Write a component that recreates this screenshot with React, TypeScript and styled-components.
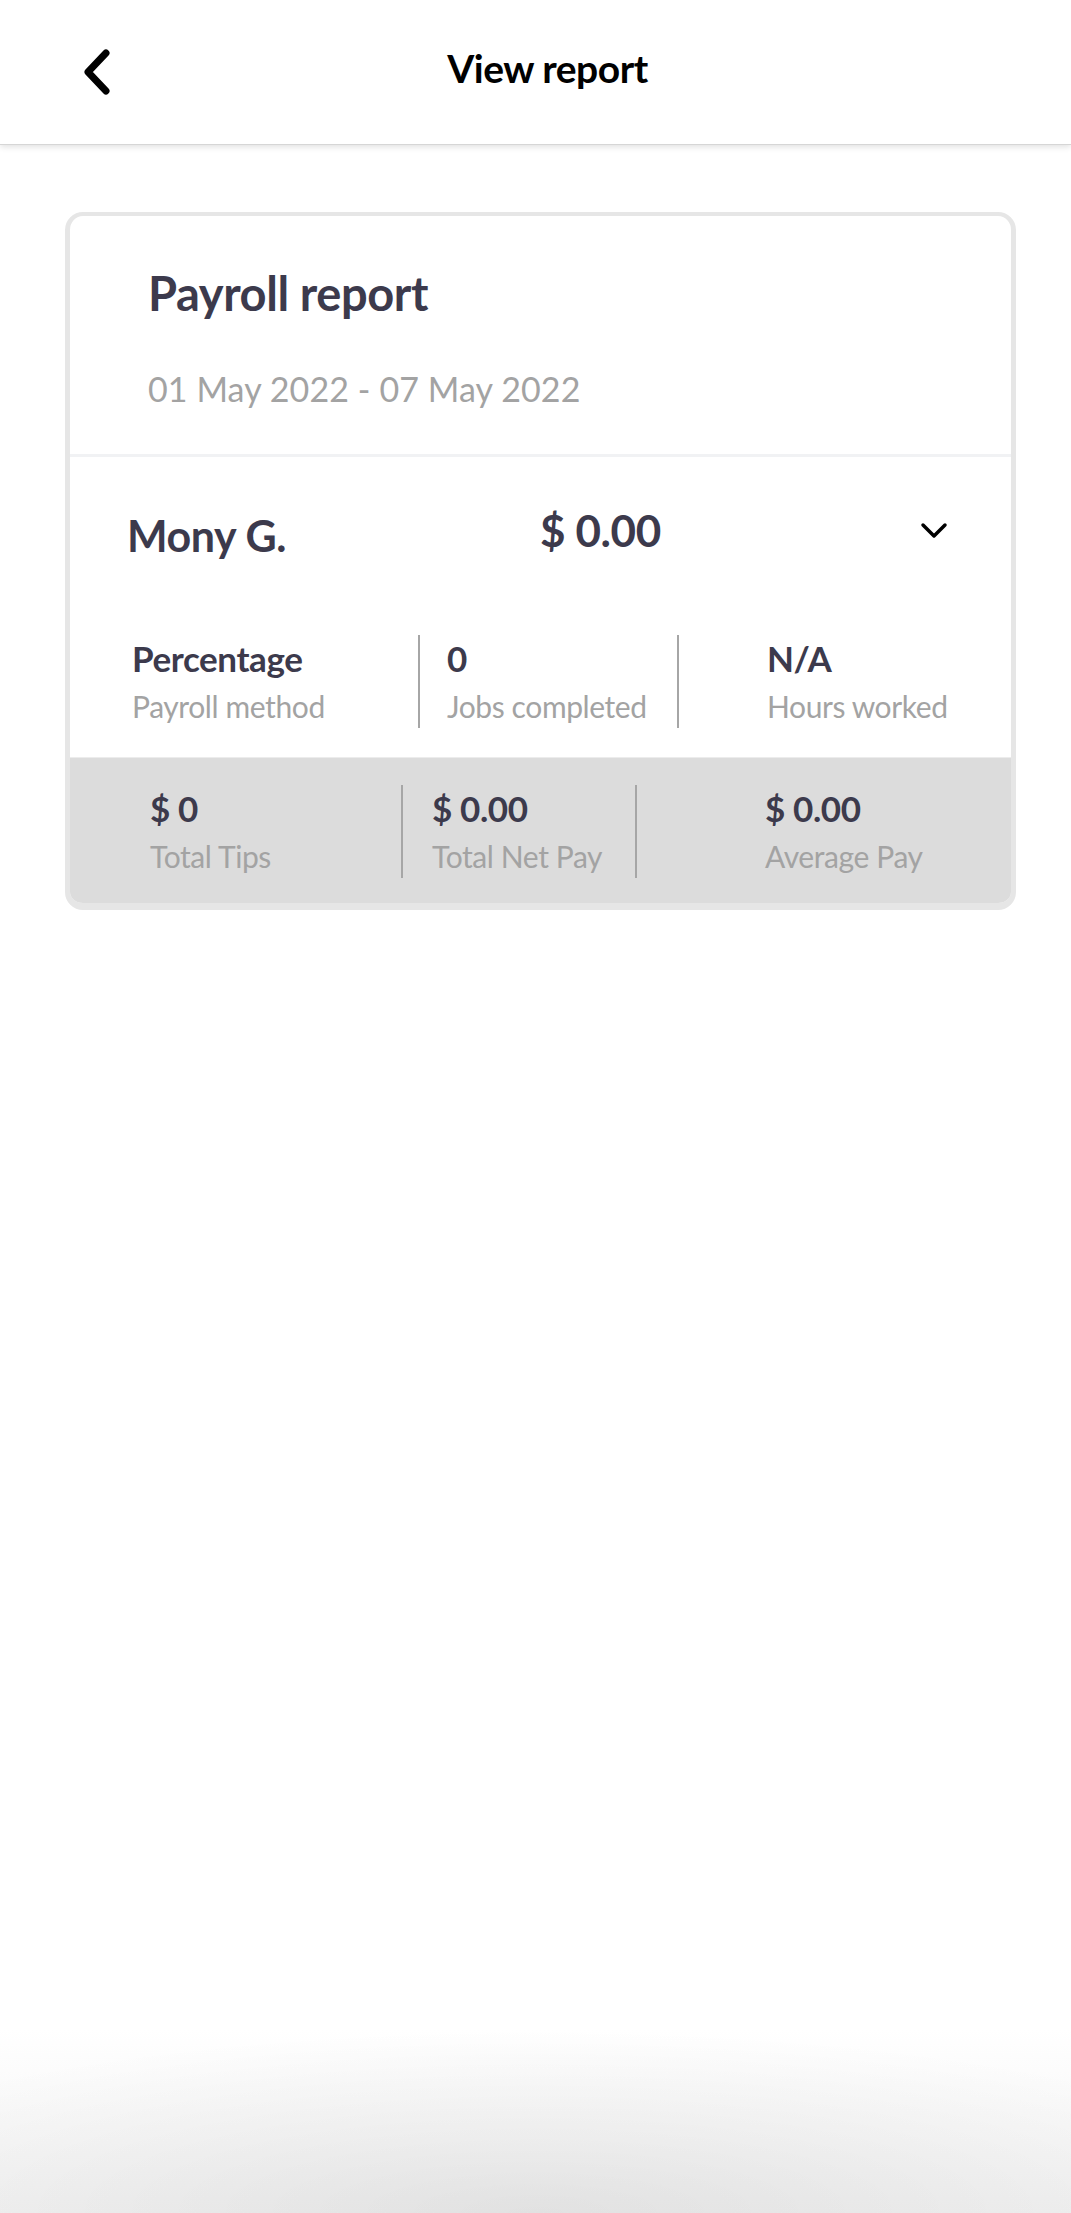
import React from "react"
import styled, { createGlobalStyle } from "styled-components"

const GlobalStyle = createGlobalStyle`
  html, body {
    margin: 0;
    padding: 0;
    background: #ffffff;
  }

  body {
    font-family: Lato, "Open Sans", "Liberation Sans", sans-serif;
    -webkit-font-smoothing: antialiased;
  }

  * {
    box-sizing: border-box;
  }
`

const DARK = "#3c3a4c"
const MUTED = "#a3a3a3"

const Page = styled.div`
  min-height: 2213px;
  display: flex;
  flex-direction: column;
  background: #ffffff;
`

const TopBar = styled.header`
  height: 144px;
  display: grid;
  grid-template-columns: 160px 1fr 160px;
  align-items: center;
  background: #ffffff;
  box-shadow: 0 1px 0 #d6d6d6, 0 3px 6px rgba(0, 0, 0, 0.12);
  position: relative;
  z-index: 1;
`

const BackButton = styled.button`
  justify-self: start;
  margin-left: 82px;
  padding: 0;
  border: none;
  background: none;
  display: flex;
  cursor: pointer;
`

const TopTitle = styled.h1`
  margin: 0 0 8px;
  padding-left: 24px;
  text-align: center;
  font-size: 39px;
  font-weight: 700;
  letter-spacing: -0.5px;
  color: #000000;
`

const Content = styled.main`
  flex: 1;
  padding: 68px 55px 0 65px;
`

const Card = styled.section`
  border: 5px solid #e6e6e6;
  border-top-width: 4px;
  border-bottom-width: 7px;
  border-radius: 18px;
  overflow: hidden;
  background: #ffffff;
`

const CardHead = styled.div`
  padding: 49px 0 44px 78px;
  border-bottom: 3px solid #f1f2f4;
`

const ReportTitle = styled.h2`
  margin: 0;
  font-size: 47px;
  line-height: 1.2;
  font-weight: 700;
  letter-spacing: -0.4px;
  color: ${DARK};
`

const DateRange = styled.div`
  margin-top: 48px;
  font-size: 34px;
  line-height: 1.2;
  font-weight: 400;
  letter-spacing: 0.1px;
  color: ${MUTED};
`

const EmployeeRow = styled.div`
  height: 153px;
  display: grid;
  grid-template-columns: 413px 1fr 28px;
  align-items: center;
  padding: 0 63px 0 57px;
`

const EmployeeName = styled.div`
  font-size: 43px;
  line-height: 1.2;
  font-weight: 700;
  letter-spacing: -0.4px;
  color: ${DARK};
  transform: translateY(2px);
`

const Amount = styled.div`
  font-size: 44px;
  line-height: 1.2;
  font-weight: 700;
  letter-spacing: -0.4px;
  color: ${DARK};
  transform: translateY(-3px);
`

const ExpandIcon = styled.svg`
  display: block;
  transform: translateY(-3px);
`

const StatsRow = styled.div<{ $shaded?: boolean; $columns: string }>`
  display: grid;
  grid-template-columns: ${(p) => p.$columns};
  padding: ${(p) => (p.$shaded ? "27px 0 25px" : "25px 0 29px")};
  background: ${(p) => (p.$shaded ? "#dcdcdc" : "#ffffff")};
  border-top: ${(p) => (p.$shaded ? "1px solid #ececec" : "none")};
`

const Stat = styled.div<{ $inset: number; $divided?: boolean }>`
  padding: 2px 0 4px ${(p) => p.$inset}px;
  border-left: ${(p) => (p.$divided ? "2px solid #a6a6a6" : "none")};
`

const StatValue = styled.div`
  font-size: 35px;
  line-height: 43px;
  font-weight: 700;
  letter-spacing: -0.4px;
  color: ${DARK};
`

const StatLabel = styled.div`
  margin-top: 8px;
  font-size: 30px;
  line-height: 36px;
  font-weight: 400;
  letter-spacing: -0.4px;
  color: ${MUTED};
  white-space: nowrap;
`

const BottomFade = styled.div`
  height: 185px;
  background:
    radial-gradient(ellipse 75% 100% at 50% 100%, rgba(0, 0, 0, 0.07), rgba(0, 0, 0, 0) 100%),
    linear-gradient(to bottom, #ffffff 0%, #fbfbfb 30%, #f2f2f2 100%);
`

interface StatItem {
  value: string
  label: string
  inset: number
}

const detailStats: StatItem[] = [
  { value: "Percentage", label: "Payroll method", inset: 62 },
  { value: "0", label: "Jobs completed", inset: 27 },
  { value: "N/A", label: "Hours worked", inset: 88 },
]

const payStats: StatItem[] = [
  { value: "$ 0", label: "Total Tips", inset: 80 },
  { value: "$ 0.00", label: "Total Net Pay", inset: 29 },
  { value: "$ 0.00", label: "Average Pay", inset: 128 },
]

const StatsBlock = ({ items, columns, shaded }: { items: StatItem[]; columns: string; shaded?: boolean }) => (
  <StatsRow $columns={columns} $shaded={shaded}>
    {items.map((item, i) => (
      <Stat key={item.label} $inset={item.inset} $divided={i > 0}>
        <StatValue>{item.value}</StatValue>
        <StatLabel>{item.label}</StatLabel>
      </Stat>
    ))}
  </StatsRow>
)

export default function App() {
  return (
    <Page>
      <GlobalStyle />
      <TopBar>
        <BackButton aria-label="Back">
          <svg width="30" height="46" viewBox="0 0 30 46" fill="none">
            <polyline
              points="24,4 6,23 24,42"
              stroke="#000"
              strokeWidth="7"
              strokeLinecap="round"
              strokeLinejoin="round"
            />
          </svg>
        </BackButton>
        <TopTitle>View report</TopTitle>
        <span />
      </TopBar>

      <Content>
        <Card>
          <CardHead>
            <ReportTitle>Payroll report</ReportTitle>
            <DateRange>01 May 2022 - 07 May 2022</DateRange>
          </CardHead>

          <EmployeeRow>
            <EmployeeName>Mony G.</EmployeeName>
            <Amount>$ 0.00</Amount>
            <ExpandIcon width="28" height="18" viewBox="0 0 28 18" fill="none">
              <polyline
                points="3,3 14,14 25,3"
                stroke="#000"
                strokeWidth="3.5"
                strokeLinecap="round"
                strokeLinejoin="round"
              />
            </ExpandIcon>
          </EmployeeRow>

          <StatsBlock items={detailStats} columns="348px 259px 1fr" />
          <StatsBlock items={payStats} columns="331px 234px 1fr" shaded />
        </Card>
      </Content>

      <BottomFade />
    </Page>
  )
}
